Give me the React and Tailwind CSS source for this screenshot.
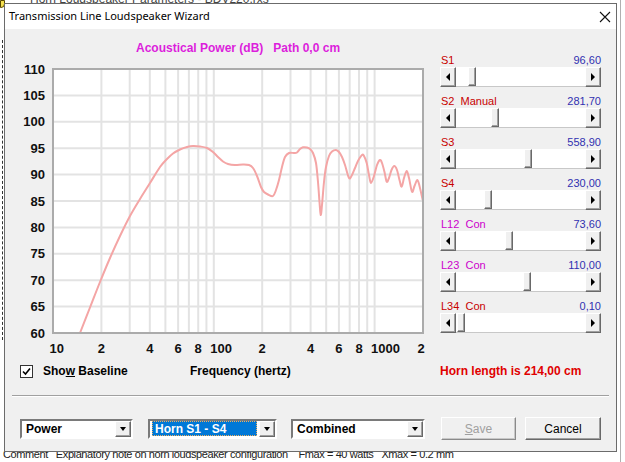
import React from "react";

const SLIDERS = [
  { label: "S1", extra: "", color: "text-[#c80000]", value: "96,60", pos: 12 },
  { label: "S2", extra: "Manual", color: "text-[#c80000]", value: "281,70", pos: 35 },
  { label: "S3", extra: "", color: "text-[#c80000]", value: "558,90", pos: 68 },
  { label: "S4", extra: "", color: "text-[#c80000]", value: "230,00", pos: 28 },
  { label: "L12", extra: "Con", color: "text-[#cc00cc]", value: "73,60", pos: 49 },
  { label: "L23", extra: "Con", color: "text-[#cc00cc]", value: "110,00", pos: 67 },
  { label: "L34", extra: "Con", color: "text-[#c80000]", value: "0,10", pos: 1 },
];

// curve traced off the plot, in page pixels
const CURVE = [
  [80, 333], [90, 307.5], [100, 282], [110, 258], [120, 236], [130, 216], [140, 199], [150, 183],
  [160, 167], [167, 159], [173, 153.5], [180, 149.5], [187, 147], [193, 146],
  [200, 146.5], [207, 148], [213, 152], [218, 157], [223, 161.5], [228, 164], [235, 165], [243, 164.5],
  [249, 165], [253, 168], [257, 176], [261, 187], [264, 192], [268, 194.5], [273, 196], [276, 190],
  [279, 180], [282, 167], [285, 157], [289, 153], [294, 153], [297, 152.5], [300, 149], [303, 147.3],
  [307, 147.5], [310, 149], [313, 153], [316, 163], [318, 182], [319.5, 202], [320.7, 215], [322, 205],
  [324, 182], [326, 167], [329, 156], [332, 151.5], [336, 150], [339, 152], [342, 157], [345, 165],
  [349, 178], [352, 175], [355, 168], [358, 161], [362, 155], [364, 156], [366.7, 163], [369, 175],
  [371, 183], [374, 176], [377, 165], [380, 160], [382, 163], [384.5, 172], [386.7, 181.7], [389, 178],
  [391.5, 170], [394.3, 166], [397, 170], [399.5, 180], [401.7, 186.7], [404, 178], [406.7, 171],
  [409, 178], [412, 191.7], [414.5, 186], [417.3, 180], [419.5, 186], [422.7, 200],
];

const L = 53, R = 423, T = 69, B = 333;
const fx = (f) => L + ((R - L) * Math.log10(f / 10)) / Math.log10(200);
const dy = (db) => T + ((110 - db) * (B - T)) / 50;

function smooth(pts) {
  let d = `M${pts[0][0]},${pts[0][1]}`;
  for (let i = 0; i < pts.length - 1; i++) {
    const p0 = pts[i - 1] || pts[i], p1 = pts[i], p2 = pts[i + 1], p3 = pts[i + 2] || p2;
    const c1 = [p1[0] + (p2[0] - p0[0]) / 6, p1[1] + (p2[1] - p0[1]) / 6];
    const c2 = [p2[0] - (p3[0] - p1[0]) / 6, p2[1] - (p3[1] - p1[1]) / 6];
    d += ` C${c1[0]},${c1[1]} ${c2[0]},${c2[1]} ${p2[0]},${p2[1]}`;
  }
  return d;
}

const GRID_F = [20, 30, 40, 50, 60, 70, 80, 90, 100, 200, 300, 400, 500, 600, 700, 800, 900, 1000];
const XLABELS = [
  { f: 10, t: "10", start: true }, { f: 20, t: "2" }, { f: 40, t: "4" }, { f: 60, t: "6" }, { f: 80, t: "8" },
  { f: 100, t: "100", start: true }, { f: 200, t: "2" }, { f: 400, t: "4" }, { f: 600, t: "6" },
  { f: 800, t: "8" }, { f: 1000, t: "1000", start: true }, { f: 2000, t: "2", nudge: -2 },
];

function Chart() {
  return (
    <svg width="420" height="300" viewBox="10 60 420 300" className="mt-[4px] block">
      <rect x={L} y={T} width={R - L} height={B - T} fill="#fff" />
      {[1, 2, 3, 4, 5, 6, 7, 8, 9].map((k) => (
        <line key={k} x1={L} x2={R} y1={dy(110 - k * 5)} y2={dy(110 - k * 5)} stroke="#e3e3e3" strokeWidth="2" />
      ))}
      {GRID_F.map((f) => (
        <line key={f} x1={fx(f)} x2={fx(f)} y1={T} y2={B} stroke="#e3e3e3" strokeWidth="2" />
      ))}
      <path d={smooth(CURVE)} fill="none" stroke="#f4a5a5" strokeWidth="2" />
      <rect x={L} y={T} width={R - L} height={B - T} fill="none" stroke="#ababab" strokeWidth="2" />
      <g fontFamily="'Liberation Sans', Arial, sans-serif" fontSize="13" fontWeight="700" fill="#111">
        {[110, 105, 100, 95, 90, 85, 80, 75, 70, 65, 60].map((v) => (
          <text key={v} x="45" y={dy(v) + 4.5} textAnchor="end">{v}</text>
        ))}
        {XLABELS.map((l, i) => (
          <text key={i} x={l.start ? fx(l.f) - 3.5 : fx(l.f) + (l.nudge || 0)} y="352.5" textAnchor={l.start ? "start" : "middle"}>
            {l.t}
          </text>
        ))}
      </g>
    </svg>
  );
}

const bevel = "bg-[#f0f0f0] border border-t-white border-l-white border-b-[#696969] border-r-[#696969] shadow-[inset_-1px_-1px_0_#a0a0a0]";

function Scroll({ pos }) {
  return (
    <div className="flex h-[20px] w-[161px] bg-white">
      <div className={`flex w-[16px] items-center justify-center ${bevel}`}>
        <div className="h-0 w-0 border-y-[4px] border-r-[4px] border-y-transparent border-r-black" />
      </div>
      <div className="flex flex-1 border-b border-b-[#c8c8c8]">
        <div style={{ width: pos }} />
        <div className={`w-[8px] ${bevel}`} />
      </div>
      <div className={`flex w-[16px] items-center justify-center ${bevel}`}>
        <div className="h-0 w-0 border-y-[4px] border-l-[4px] border-y-transparent border-l-black" />
      </div>
    </div>
  );
}

function Combo({ text, w, selected }) {
  return (
    <div className={`flex h-[20px] ${w} border-2 border-t-[#7a7a7a] border-l-[#7a7a7a] border-b-white border-r-white bg-white`}>
      <div className="flex flex-1 items-center px-[2px]">
        {selected ? (
          <span className="flex h-[15px] w-full items-center border border-dotted border-[#f0b060] bg-[#0078d7] px-[2px] text-[12px] font-bold text-white">
            {text}
          </span>
        ) : (
          <span className="px-[2px] text-[12px] font-bold text-black">{text}</span>
        )}
      </div>
      <div className={`flex w-[16px] items-center justify-center ${bevel}`}>
        <div className="h-0 w-0 border-x-[3.5px] border-t-[4px] border-x-transparent border-t-black" />
      </div>
    </div>
  );
}

export default function App() {
  return (
    <div className="relative h-[462px] w-[625px] overflow-hidden bg-white font-['Liberation_Sans',Arial,sans-serif]">
      {/* window behind the dialog */}
      <div className="absolute left-[30px] top-[-10px] text-[12px] text-[#444]">Horn Loudspeaker Parameters - BDV220.rxs</div>
      <div className="absolute left-0 top-0 h-[8px] w-[5px] rounded-br-[4px] border border-[#5a4a00] bg-[#f5e050]" />
      <div className="absolute left-[2px] top-[40px] h-[300px] border-l border-dashed border-l-[#333]" />
      <div className="absolute left-[620px] top-0 h-[462px] w-px bg-[#b0b0b0]" />
      <div className="absolute left-[3px] top-[446px] whitespace-pre text-[11px] tracking-[-0.4px] text-[#222]">
        Comment   Explanatory note on horn loudspeaker configuration    Fmax = 40 watts   Xmax = 0.2 mm
      </div>

      <div className="absolute left-[4px] top-[3px] flex h-[449px] w-[613px] flex-col border border-[#6b6b6b] bg-[#f0f0f0]">
        <div className="flex h-[25px] shrink-0 items-center justify-between bg-white pl-[4px] pr-[5px]">
          <span className="font-['Noto_Sans',sans-serif] text-[11px] text-black">Transmission Line Loudspeaker Wizard</span>
          <svg width="12" height="12" viewBox="0 0 12 12">
            <path d="M1 1 L11 11 M11 1 L1 11" stroke="#111" strokeWidth="1.1" />
          </svg>
        </div>

        <div className="flex flex-1 flex-col">
          <div className="flex pt-[11px]">
            <div className="ml-[5px] flex w-[420px] flex-col">
              <div className="h-[16px] whitespace-pre pl-[126px] text-[12px] font-bold leading-[16px] text-[#dc1edc]">
                Acoustical Power (dB)   Path 0,0 cm
              </div>
              <Chart />
            </div>
            <div className="ml-[10px] flex w-[162px] flex-col gap-[7px] pt-[13px]">
              {SLIDERS.map((s) => (
                <div key={s.label} className="flex flex-col">
                  <div className="flex h-[14px] items-center justify-between pl-px pr-[1px] text-[11px] leading-[14px]">
                    <span className={`whitespace-pre ${s.color}`}>
                      {s.label}
                      {s.extra ? `  ${s.extra}` : ""}
                    </span>
                    <span className="text-[#3030b0]">{s.value}</span>
                  </div>
                  <Scroll pos={s.pos} />
                </div>
              ))}
            </div>
          </div>

          <div className="mt-[3px] flex h-[16px] items-center text-[12px] font-bold">
            <div className="ml-[15px] flex w-[170px] items-center">
              <div className="flex h-[13px] w-[13px] items-center justify-center border border-[#333] bg-white">
                <svg width="9" height="9" viewBox="0 0 9 9">
                  <path d="M1 4.5 L3.5 7 L8 1.5" fill="none" stroke="#000" strokeWidth="1.6" />
                </svg>
              </div>
              <span className="ml-[10px]">
                Sho<span className="underline">w</span> Baseline
              </span>
            </div>
            <div className="w-[250px]">Frequency (hertz)</div>
            <div className="text-[#e00000]">Horn length is 214,00 cm</div>
          </div>

          <div className="mx-[7px] mt-[16px] h-px bg-[#a0a0a0]" />
          <div className="mx-[7px] h-px bg-white" />

          <div className="mt-[20px] flex h-[23px] items-center">
            <div className="ml-[15px]"><Combo text="Power" w="w-[113px]" /></div>
            <div className="ml-[15px]"><Combo text="Horn S1 - S4" w="w-[129px]" selected /></div>
            <div className="ml-[14px]"><Combo text="Combined" w="w-[134px]" /></div>
            <button className="ml-[16px] h-[23px] w-[75px] border border-t-white border-l-white border-b-[#8a8a8a] border-r-[#8a8a8a] bg-[#f0f0f0] text-[12px] text-[#a0a0a0] shadow-[inset_-1px_-1px_0_#c8c8c8]">
              <span className="underline">S</span>ave
            </button>
            <button className="ml-[9px] h-[23px] w-[76px] border border-t-white border-l-white border-b-[#696969] border-r-[#696969] bg-[#f0f0f0] text-[12px] text-black shadow-[inset_-1px_-1px_0_#a0a0a0]">
              Cancel
            </button>
          </div>
        </div>
      </div>
    </div>
  );
}
